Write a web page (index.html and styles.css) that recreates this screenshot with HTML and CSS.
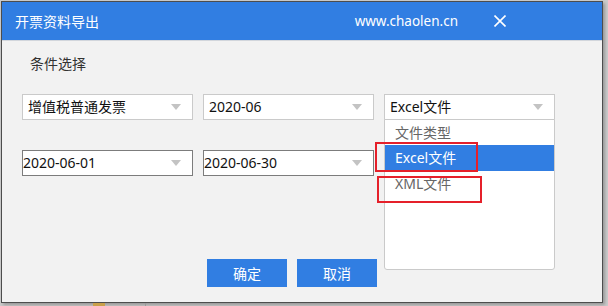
FILE: index.html
```html
<!DOCTYPE html>
<html lang="zh-CN">
<head>
    <meta charset="UTF-8">
    <title>开票资料导出</title>
    <link rel="stylesheet" href="styles.css">
</head>
<body>
    <div class="dialog">
        <div class="titlebar">
            <span class="title">开票资料导出</span>
            <span class="site">www.chaolen.cn</span>
            <span class="close">
                <svg width="12" height="12" viewBox="0 0 12 12">
                    <path d="M0.5 0.5 L11.5 11.5 M11.5 0.5 L0.5 11.5" stroke="#fff" stroke-width="1.6" fill="none"/>
                </svg>
            </span>
        </div>

        <div class="panel-body">
            <div class="section-title">条件选择</div>

            <div class="form-grid">
                <div class="select">
                    <span>增值税普通发票</span>
                    <i class="arrow"></i>
                </div>
                <div class="select">
                    <span>2020-06</span>
                    <i class="arrow"></i>
                </div>
                <div class="select open">
                    <span>Excel文件</span>
                    <i class="arrow"></i>
                    <ul class="options">
                        <li>文件类型</li>
                        <li class="active">Excel文件</li>
                        <li>XML文件</li>
                    </ul>
                    <div class="mark mark-excel"></div>
                    <div class="mark mark-xml"></div>
                </div>
                <div class="select date">
                    <span>2020-06-01</span>
                    <i class="arrow"></i>
                </div>
                <div class="select date">
                    <span>2020-06-30</span>
                    <i class="arrow"></i>
                </div>
            </div>

            <div class="actions">
                <button class="btn">确定</button>
                <button class="btn">取消</button>
            </div>
        </div>
    </div>

    <div class="desk-strip">
        <span class="desk-icon"></span>
        <span class="desk-line"></span>
    </div>
</body>
</html>
```

FILE: styles.css
```css
/* Fondo del escritorio */
body {
    margin: 0;
    padding: 1px 0 0 1px;
    background: #cbcbcb;
    font-family: "Noto Sans", "Noto Sans CJK SC", sans-serif;
    font-size: 14px;
    color: #222;
    width: 608px;
    height: 306px;
    box-sizing: border-box;
    overflow: hidden;
}

.dialog {
    width: 602px;
    height: 302px;
    box-sizing: border-box;
    border: 1px solid #4d4d4d;
    background: #f2f2f2;
    box-shadow: 2px 2px 3px rgba(0, 0, 0, 0.25);
    display: flex;
    flex-direction: column;
}

/* Barra de título */
.titlebar {
    height: 38px;
    background: #317ee2;
    border-bottom: 1px solid #d2d6dc;
    display: flex;
    align-items: center;
    padding: 0 96px 0 13px;
    color: #fff;
    flex-shrink: 0;
}

.title {
    font-size: 14px;
}

.site {
    margin-left: auto;
    font-size: 13.5px;
}

.close {
    margin-left: 36px;
    width: 12px;
    height: 12px;
    display: flex;
}

/* Contenido */
.panel-body {
    padding: 13px 0 0 20px;
    position: relative;
}

.section-title {
    margin-left: 8px;
    line-height: 20px;
    color: #333;
}

.form-grid {
    margin-top: 20px;
    display: grid;
    grid-template-columns: 171px 171px 171px;
    grid-auto-rows: 26px;
    column-gap: 10px;
    row-gap: 30px;
}

.select {
    position: relative;
    background: #fff;
    border: 1px solid #cacaca;
    box-sizing: border-box;
    display: flex;
    align-items: center;
    padding-left: 5px;
    color: #111;
}

.select span {
    line-height: 24px;
}

.select.date {
    border-color: #7c7c7c;
    padding-left: 0;
}

.arrow {
    position: absolute;
    right: 11px;
    top: 9px;
    width: 0;
    height: 0;
    border-left: 5px solid transparent;
    border-right: 5px solid transparent;
    border-top: 6px solid #c3c3c3;
}

/* Lista desplegable */
.options {
    position: absolute;
    top: 24px;
    left: -1px;
    right: -1px;
    height: 151px;
    margin: 0;
    padding: 0;
    list-style: none;
    background: #fff;
    border: 1px solid #cacaca;
    border-radius: 0 0 3px 3px;
    box-sizing: border-box;
    z-index: 2;
}

.options li {
    height: 26px;
    line-height: 26px;
    padding-left: 10px;
    color: #666;
}

.options li:first-child {
    height: 25px;
    line-height: 25px;
}

.options li.active {
    background: #317ee2;
    color: #fff;
}

/* Marcas rojas */
.mark {
    position: absolute;
    border: 2px solid #e5202a;
    box-sizing: border-box;
    z-index: 3;
}

.mark-excel {
    left: -10px;
    top: 47px;
    width: 103px;
    height: 30px;
}

.mark-xml {
    left: -8px;
    top: 81px;
    width: 105px;
    height: 27px;
}

/* Botones */
.actions {
    margin-top: 83px;
    padding-left: 185px;
    display: flex;
    gap: 10px;
}

.btn {
    width: 80px;
    height: 28px;
    border: none;
    background: #317ee2;
    color: #fff;
    font-family: "Noto Sans", "Noto Sans CJK SC", sans-serif;
    font-size: 14px;
    padding: 0;
}

/* Franja inferior */
.desk-strip {
    display: flex;
    height: 3px;
}

.desk-icon {
    margin-left: 92px;
    width: 12px;
    background: #c9a04a;
}

.desk-line {
    margin-left: 40px;
    width: 1px;
    background: #9a9a9a;
}
```
